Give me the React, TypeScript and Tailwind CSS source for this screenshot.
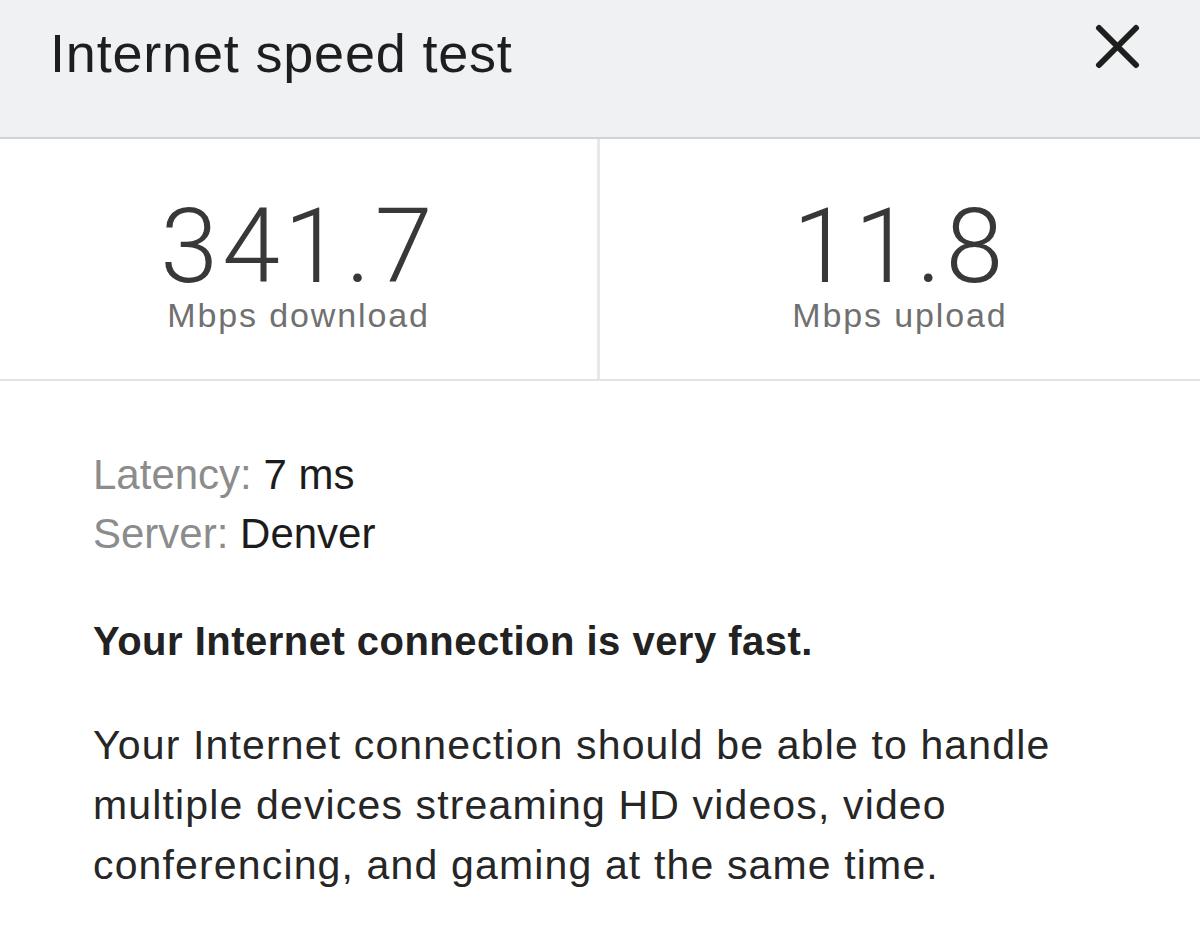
const sans = "font-['Liberation_Sans',Arial,sans-serif]";

const Stat = ({ value, label, divider }: { value: string; label: string; divider?: boolean }) => (
  <div className={`flex flex-col items-center pt-[58px] ${divider ? "border-r-[3px] border-[#e8e8e8]" : ""}`}>
    <div className="font-['Roboto',sans-serif] font-light text-[104px] leading-[100px] tracking-[0.04em] text-[#383838]">{value}</div>
    <div className={`${sans} mt-[1px] text-[34px] leading-none tracking-[0.055em] text-[#707070]`}>{label}</div>
  </div>
);

export default function App() {
  return (
    <div className={`w-[1200px] h-[925px] bg-white overflow-hidden ${sans}`}>
      <header className="h-[139px] bg-[#f0f1f3] border-b-2 border-[#d2d2d4] flex justify-between pl-[50px] pr-[60px]">
        <h1 className="pt-[26px] text-[54px] leading-none tracking-[0.015em] text-[#1e1e1e]">Internet speed test</h1>
        <div className="pt-[24px]">
          <svg width="45" height="45" viewBox="0 0 45 45" fill="none" stroke="#1e1e1e" strokeWidth="6" strokeLinecap="round">
            <path d="M4 4L41 41M41 4L4 41" />
          </svg>
        </div>
      </header>

      <section className="grid grid-cols-2 h-[242px] border-b-2 border-[#e2e2e2]">
        <Stat value="341.7" label="Mbps download" divider />
        <Stat value="11.8" label="Mbps upload" />
      </section>

      <section className="pl-[93px] pt-[64px]">
        <div className="text-[42px] leading-[59px]">
          <div>
            <span className="text-[#8c8c8c]">Latency:</span> <span className="text-[#1c1c1c]">7 ms</span>
          </div>
          <div>
            <span className="text-[#8c8c8c]">Server:</span> <span className="text-[#1c1c1c]">Denver</span>
          </div>
        </div>

        <p className="mt-[49px] text-[40px] leading-[59px] font-bold tracking-[0.012em] text-[#222]">
          Your Internet connection is very fast.
        </p>

        <p className="mt-[44px] text-[41px] leading-[60px] tracking-[0.028em] text-[#262626]">
          <span className="block">Your Internet connection should be able to handle</span>
          <span className="block">multiple devices streaming HD videos, video</span>
          <span className="block">conferencing, and gaming at the same time.</span>
        </p>
      </section>
    </div>
  );
}
